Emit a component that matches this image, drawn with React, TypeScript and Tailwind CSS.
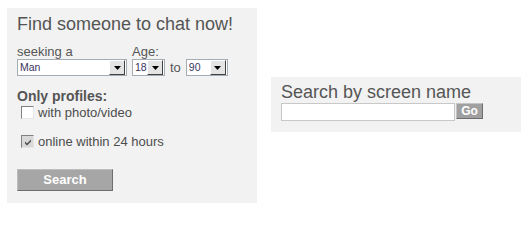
import React from 'react';

function Dropdown({ value, width }: { value: string; width: string }) {
  return (
    <div className={`flex h-[17px] items-center border border-[#a5acb2] bg-white ${width}`}>
      <span className="flex-1 pl-[2px] text-[10.5px] leading-[15px] text-[#3b3560]">{value}</span>
      <span className="mr-px flex h-[15px] w-[16px] items-center justify-center border-t border-l border-t-white border-l-white border-r border-b border-r-[#404040] border-b-[#404040] bg-[#e4e4e4]">
        <svg width="7" height="4" viewBox="0 0 7 4">
          <path d="M0 0h7L3.5 4z" fill="#000" />
        </svg>
      </span>
    </div>
  );
}

function Check({ checked, label }: { checked?: boolean; label: string }) {
  return (
    <label className="flex items-center gap-[4px] text-[13px] leading-[15px] text-[#4d4d4d]">
      <span
        className={`flex h-[13px] w-[13px] items-center justify-center border-t border-l border-t-[#808080] border-l-[#808080] border-r border-b border-r-[#e6e6e6] border-b-[#e6e6e6] ${
          checked ? 'bg-[#d8d8d8]' : 'bg-white'
        }`}
      >
        {checked && (
          <svg width="8" height="8" viewBox="0 0 8 8">
            <path d="M1 3.5l2 2L7 1.5v2L3 7.5 1 5.5z" fill="#4a4a4a" />
          </svg>
        )}
      </span>
      {label}
    </label>
  );
}

export default function App() {
  return (
    <div className="flex h-[210px] items-start bg-white pt-[8px] pl-[7px] font-['Liberation_Sans',Arial,sans-serif] text-[#555]">
      {/* chat search */}
      <div className="h-[195px] w-[250px] bg-[#f2f2f2] pt-[5px] pl-[10px]">
        <h1 className="text-[18px] leading-[22px]">Find someone to chat now!</h1>

        <div className="mt-[9px] flex items-start">
          <div>
            <div className="text-[13px] leading-[15px]">seeking a</div>
            <Dropdown value="Man" width="w-[110px]" />
          </div>
          <div className="ml-[5px]">
            <div className="text-[13px] leading-[15px]">Age:</div>
            <div className="flex h-[17px] items-center">
              <Dropdown value="18" width="w-[33px]" />
              <span className="mx-[5px] text-[13px] leading-[15px]">to</span>
              <Dropdown value="90" width="w-[42px]" />
            </div>
          </div>
        </div>

        <div className="mt-[12px] text-[14px] leading-[16px] font-bold">Only profiles:</div>
        <div className="mt-[1px] ml-[4px] flex flex-col gap-[14px]">
          <Check label="with photo/video" />
          <Check checked label="online within 24 hours" />
        </div>

        <button className="mt-[20px] h-[22px] w-[96px] border-t border-l border-t-[#bdbdbd] border-l-[#bdbdbd] border-r border-b border-r-[#6e6e6e] border-b-[#6e6e6e] bg-[#a6a6a6] text-[13px] font-bold text-white">
          Search
        </button>
      </div>

      {/* screen name search */}
      <div className="mt-[69px] ml-[14px] h-[55px] w-[250px] bg-[#f2f2f2] pt-[5px] pl-[10px]">
        <h2 className="text-[18px] leading-[21px]">Search by screen name</h2>
        <div className="flex items-start">
          <input className="h-[18px] w-[174px] border border-[#c8c8c8] bg-white outline-none" />
          <button className="ml-px h-[16px] w-[27px] border-t border-l border-t-[#c4c4c4] border-l-[#c4c4c4] border-r border-b border-r-[#6e6e6e] border-b-[#6e6e6e] bg-[#a0a0a0] text-[12px] leading-[14px] font-bold text-white">
            Go
          </button>
        </div>
      </div>
    </div>
  );
}
